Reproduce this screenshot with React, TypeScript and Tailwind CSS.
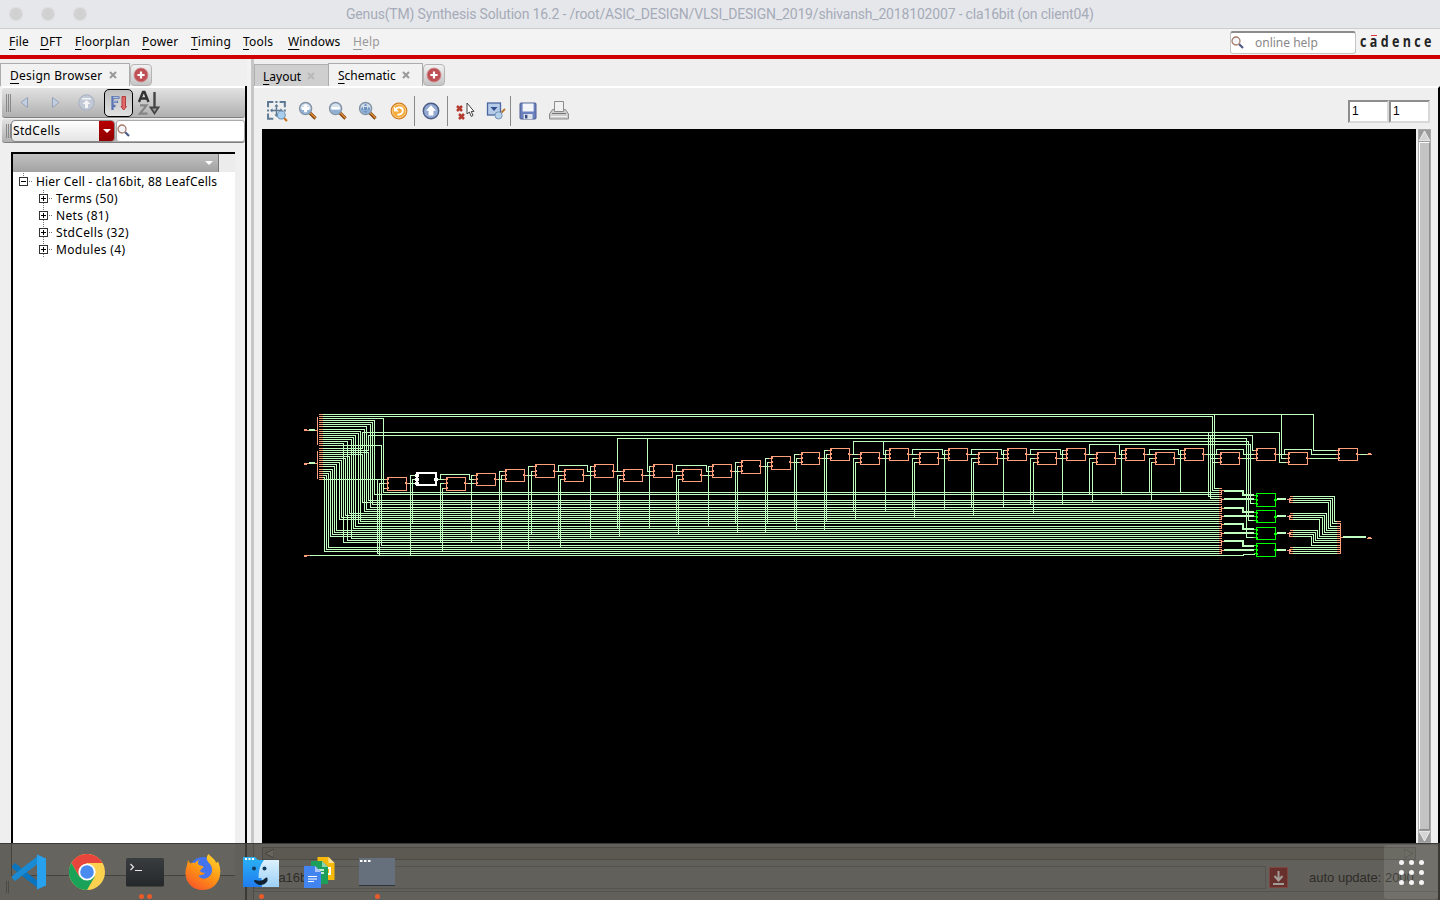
import React from "react";

const WIRE = "#c1ffc1";
const PIN = "#ffa07a";
const GREEN = "#00ff00";

/* ---------- schematic data ---------- */

type Cell = { x: number; y: number; h: number; w?: number; pins: number[]; out: number };

const A = (x: number, y: number): Cell => ({ x, y, h: 12, pins: [2, 6, 10], out: 6 });
const B = (x: number, y: number): Cell => ({ x, y, h: 13, pins: [2, 7, 11], out: 7 });

const cells: Cell[] = [
  { x: 387, y: 477, h: 13, pins: [2, 6, 11], out: 6 },
  { x: 446, y: 477, h: 13, pins: [2, 6, 11], out: 6 },
  { x: 476, y: 473, h: 12, pins: [2, 6, 10], out: 6 },
  A(505, 469), B(535, 464), A(564, 469), B(594, 464), A(623, 469), B(653, 464),
  A(682, 469), B(712, 464),
  { x: 741, y: 460, h: 13, pins: [2, 6, 11], out: 6 },
  { x: 771, y: 456, h: 13, pins: [2, 6, 10], out: 6 },
  { x: 801, y: 452, h: 12, w: 18, pins: [2, 6, 10], out: 6 },
  A(830, 448), A(860, 452), A(889, 448), A(919, 452), A(948, 448), A(978, 452),
  A(1007, 448), A(1037, 452), A(1066, 448), A(1096, 452), A(1125, 448), A(1155, 452),
  A(1184, 448), A(1220, 452), A(1256, 448), A(1288, 452), A(1338, 448),
];

const greenCells = [
  { y: 493, h: 13 },
  { y: 510, h: 12 },
  { y: 527, h: 12 },
  { y: 543, h: 13 },
];

/* [start y, bend x, bus y] */
const fan: number[][] = [
  [418, 383, 492], [420, 374, 494], [422, 372, 504], [424, 370, 507], [426, 366, 509],
  [429, 364, 511], [431, 360, 521], [433, 358, 523], [435, 355, 526], [437, 353, 528],
  [439, 351, 538], [441, 347, 540], [443, 343, 542], [445, 381, 545],
  [452, 368, 500], [454, 362, 502], [456, 349, 513], [458, 345, 515], [460, 341, 517],
  [462, 339, 519], [464, 336, 530], [466, 334, 532], [469, 332, 534], [471, 330, 536],
  [473, 328, 547], [475, 326, 549], [477, 324, 551],
];

/* [pin y, drop x, bus y, pin x] */
const drops: number[][] = [
  [483, 379, 555, 387], [488, 383, 488, 387], [475, 410, 555, 416], [479, 412, 523, 416],
  [483, 440, 542, 446], [488, 442, 551, 446], [475, 471, 542, 476], [471, 499, 540, 505],
  [475, 501, 549, 505], [466, 528, 549, 535], [471, 531, 534, 535], [475, 558, 538, 564],
  [479, 560, 547, 564], [466, 590, 538, 594], [475, 617, 528, 623], [479, 619, 536, 623],
  [466, 649, 528, 653], [475, 676, 525, 682], [479, 678, 534, 682], [466, 708, 526, 712],
  [462, 735, 523, 741], [466, 737, 532, 741], [458, 765, 532, 771], [462, 767, 523, 771],
  [454, 794, 521, 801], [458, 796, 530, 801], [450, 824, 530, 830], [454, 826, 521, 830],
  [458, 853, 511, 860], [462, 855, 519, 860], [450, 885, 511, 889], [458, 912, 509, 919],
  [462, 914, 516, 919], [450, 944, 509, 948], [458, 971, 507, 978], [462, 973, 515, 978],
  [450, 1003, 507, 1007], [458, 1030, 504, 1037], [462, 1033, 513, 1037], [450, 1062, 504, 1066],
  [458, 1089, 494, 1096], [462, 1092, 502, 1096], [450, 1121, 494, 1125], [458, 1149, 492, 1155],
  [462, 1151, 500, 1155], [450, 1180, 492, 1184],
];

/* [y, from x, to x] */
const links: number[][] = [
  [483, 406, 416], [479, 436, 446], [483, 465, 476], [479, 495, 505], [475, 524, 535],
  [471, 554, 564], [475, 583, 594], [471, 613, 623], [475, 642, 653], [471, 672, 682],
  [475, 701, 712], [471, 731, 741], [466, 760, 771], [462, 790, 801], [458, 819, 830],
  [454, 849, 860], [458, 879, 889], [454, 908, 919], [458, 938, 948], [454, 967, 978],
  [458, 997, 1007], [454, 1026, 1037], [458, 1056, 1066], [454, 1085, 1096], [458, 1115, 1125],
  [454, 1144, 1155], [458, 1174, 1184], [454, 1203, 1220], [458, 1239, 1256], [454, 1275, 1288],
  [458, 1307, 1338], [454, 1357, 1366],
];

/* [from x, from y, top y, to x, end x] */
const hops: number[][] = [
  [440, 479, 474, 469, 476], [558, 471, 465, 587, 594], [676, 471, 465, 706, 712],
  [617, 471, 438, 647, 653], [853, 454, 441, 883, 889], [912, 454, 449, 942, 948],
  [971, 454, 449, 1001, 1007], [1030, 454, 449, 1060, 1066], [1089, 454, 444, 1119, 1125],
  [1149, 454, 449, 1178, 1184], [1216, 454, 449, 1243, 1256], [1284, 454, 449, 1311, 1338],
];

const trunk = [
  "M322 414H1313V450H1338", "M322 416H1212V490H1218", "M322 448H362V432H1279V462H1288",
  "M322 450H368V435H1252V450H1256", "M617 438H1246V537H1254", "M853 441H1248V520H1254",
  "M1089 444H1250V503H1254", "M1214 414V488H1218", "M1210 435V498H1218", "M1208 432V496H1218",
  "M1281 414V458H1288", "M1210 458H1220", "M1212 462H1220", "M322 479H387", "M377 479V553H1218",
  "M308 555H1243V554H1254",
].join("");

const groups = [
  [488, 490, 492, 494], [496, 498, 500, 502], [504, 507, 509, 511], [513, 515, 517, 519],
  [521, 523, 526, 528], [530, 532, 534, 536], [538, 540, 542, 545], [547, 549, 551, 553],
];
const apex = [490, 499, 508, 516, 524, 533, 541, 550];

const outs = [
  [496, 1334, 521], [498, 1332, 523], [500, 1330, 526], [502, 1328, 528],
  [513, 1326, 530], [515, 1324, 532], [517, 1322, 534], [519, 1319, 536],
  [530, 1317, 538], [532, 1315, 540], [534, 1313, 542], [536, 1311, 545],
  [547, 1320, 547], [549, 1320, 549], [551, 1320, 551], [553, 1320, 553],
];
const outGroups = [[496, 498, 500, 502], [513, 515, 517, 519], [530, 532, 534, 536], [547, 549, 551, 553]];
const outApex = [499, 516, 533, 550];

const topBus = [414, 416, 418, 420, 422, 424, 426, 429, 431, 433, 435, 437, 439, 441, 443, 445];
const lowBus = [448, 450, 452, 454, 456, 458, 460, 462, 464, 466, 469, 471, 473, 475, 477, 479];

const wirePath =
  trunk +
  fan.map(([y, x, b]) => `M322 ${y}H${x}V${b}H1218`).join("") +
  drops.map(([y, x, b, p]) => `M${p} ${y}H${x}V${b}`).join("") +
  links.map(([y, a, b]) => `M${a} ${y}H${b}`).join("") +
  hops.map(([x, y, t, x2, e]) => `M${x} ${y}V${t}H${x2}V${y}H${e}`).join("") +
  outs.map(([y, x, t]) => `M1291 ${y}H${x}V${t}H1336`).join("");

const pinPath =
  topBus.map((y) => `M318 ${y}H322`).join("") +
  lowBus.map((y) => `M318 ${y}H322`).join("") +
  "M317 416V444M317 450V478M304 430H317M304 463H317M304 555H309M1366 454H1371M1366 538H1371" +
  groups.map((g) => g.map((y) => `M1218 ${y}H1221`).join("") + `M1221 ${g[0] + 1}V${g[3]}`).join("") +
  apex.map((y) => `M1221 ${y}H1224`).join("") +
  outGroups.map((g) => g.map((y) => `M1289 ${y}H1292`).join("") + `M1289 ${g[0] + 1}V${g[3]}`).join("") +
  outApex.map((y) => `M1286 ${y}H1290`).join("") +
  outs.map(([, , t]) => `M1336 ${t}H1340`).join("") +
  "M1340 522V553M1340 537H1343";

const cellPath = cells
  .map((c) => {
    const w = c.w ?? 19;
    return (
      `M${c.x} ${c.y}h${w}v${c.h}h-${w}z` +
      c.pins.map((p) => `M${c.x - 3} ${c.y + p}h4`).join("") +
      `M${c.x + w - 1} ${c.y + c.out}h3`
    );
  })
  .join("");

const nubs = cells.flatMap((c) => [
  ...c.pins.map((p) => [c.x, c.y + p]),
  [c.x + (c.w ?? 19) - 1, c.y + c.out],
]);

function Schematic() {
  return (
    <svg className="block h-[714px] w-[1154px]" viewBox="262 129 1154 714" shapeRendering="crispEdges" fill="none">
      <g transform="translate(.5 .5)" strokeWidth="1">
        <path d={wirePath} stroke={WIRE} />
        <path d={pinPath} stroke={PIN} />
        <path d={cellPath} stroke={PIN} />
      </g>
      {nubs.map(([x, y], i) => (
        <rect key={i} x={x} y={y - 1} width="2" height="2" fill={PIN} />
      ))}
      {/* selected instance */}
      <rect x="417" y="473" width="19" height="12" stroke="#fff" strokeWidth="2" />
      <path d="M415 474h4v3h-4zM415 478h4v3h-4zM415 482h4v3h-4zM434 478h4v3h-4z" fill="#fff" />
      <g fill={GREEN}>
        {greenCells.map((c) => (
          <React.Fragment key={c.y}>
            <rect x="1256.5" y={c.y + 0.5} width="19" height={c.h} stroke={GREEN} fill="none" />
            {[2, 6, 10].map((p) => (
              <rect key={p} x="1254" y={c.y + p} width="4" height="1" />
            ))}
            {[2, 6, 10].map((p) => (
              <rect key={p} x="1256" y={c.y + p} width="2" height="2" />
            ))}
            <rect x="1274" y={c.y + 6} width="3" height="2" />
          </React.Fragment>
        ))}
      </g>
      <g stroke={WIRE} strokeWidth="2">
        <path d="M1224 491H1243V495H1254M1224 499H1254M1224 508H1243V512H1254M1224 516H1254M1224 524H1243V529H1254M1224 533H1254M1224 541H1243V546H1254M1224 550H1254" />
        <path d="M1277 499H1286M1277 516H1286M1277 533H1286M1277 550H1286M1343 537H1366M309 430H315M309 463H315" />
      </g>
      <path d="M304 429h3v2h-3zM304 463h3v2h-3zM304 555h3v2h-3zM1368 453h3v2h-3zM1368 537h3v2h-3z" fill={PIN} />
    </svg>
  );
}

/* ---------- small widgets ---------- */

function Menu({ label, w, off }: { label: string; w: string; off?: boolean }) {
  return (
    <span className={`${w} shrink-0 ${off ? "text-[#999]" : "text-black"}`}>
      <span className="underline decoration-1 underline-offset-[3px]">{label[0]}</span>
      {label.slice(1)}
    </span>
  );
}

function PlusButton() {
  return (
    <div className="flex h-[22px] w-[22px] items-center justify-center self-end rounded-[4px] border border-[#b4b4b4] bg-linear-to-b from-[#f2f2f2] to-[#c4c4c4]">
      <svg className="h-4 w-4" viewBox="0 0 16 16">
        <circle cx="8" cy="8" r="7" fill="#be5055" stroke="#d38c8e" strokeWidth=".8" />
        <path d="M8 4.4v7.2M4.4 8h7.2" stroke="#fff" strokeWidth="2.2" />
      </svg>
    </div>
  );
}

function Cross({ c }: { c: string }) {
  return (
    <svg className="h-2 w-2" viewBox="0 0 8 8">
      <path d="M1 1l6 6M7 1l-6 6" stroke={c} strokeWidth="2" />
    </svg>
  );
}

function Search() {
  return (
    <svg className="h-[13px] w-[13px] shrink-0" viewBox="0 0 13 13" fill="none">
      <path d="M8 8l4 4" stroke="#4a5a88" strokeWidth="2.2" />
      <circle cx="5" cy="5" r="4" fill="#f4f6fa" stroke="#a87c6c" strokeWidth="1.3" />
    </svg>
  );
}

function Zoom({ kind }: { kind: "in" | "out" | "fit" }) {
  return (
    <svg className="h-5 w-5" viewBox="0 0 20 20" fill="none">
      <path d="M11.5 11.5l6 6" stroke="#7d4310" strokeWidth="3.2" />
      <path d="M12 11.5l5.5 5.5" stroke="#dd8a34" strokeWidth="1.6" />
      <circle cx="7.6" cy="7.4" r="6" fill="#d5e2f0" stroke="#8393a6" strokeWidth="1.5" />
      <path d="M2.5 8h10.2a5 5 0 0 1-10.2 0z" fill="#8fb0d5" />
      {kind === "in" && <path d="M7.6 3.6v7.6M3.8 7.4h7.6" stroke="#fff" strokeWidth="3" />}
      {kind === "out" && <path d="M3.5 7.4h8.2" stroke="#fff" strokeWidth="2.6" />}
      {kind === "fit" && (
        <path d="M7.6 2.6l2 2.2h-4zM7.6 12.2l2-2.2h-4zM2.8 7.4l2.2-2v4zM12.4 7.4l-2.2-2v4zM6 6h3.2v3H6z" fill="#6d91bd" />
      )}
    </svg>
  );
}

function FitAll() {
  return (
    <svg className="h-[21px] w-[21px]" viewBox="0 0 20 20" fill="none">
      <path d="M1 6V1h5M12 1h5v5M1 12v5h5M8 1h2M1 8v2M17 8v2" stroke="#5d7a94" strokeWidth="1.9" />
      <path d="M9 4v10M4 9h10" stroke="#5d7a94" strokeWidth="1.4" />
      <path d="M9 2.8l2 2.4H7zM9 15.2l2-2.4H7zM2.800 9l2.400-2v4zM15.200 9l-2.400-2v4z" fill="#5d7a94" />
      <path d="M16 16l3 3" stroke="#c9701c" strokeWidth="2.2" />
      <circle cx="13.6" cy="13.4" r="3.8" fill="#a9cdec" stroke="#6f93b5" />
    </svg>
  );
}

function Undo() {
  return (
    <svg className="h-[18px] w-[18px]" viewBox="0 0 18 18" fill="none">
      <circle cx="9" cy="9" r="7.8" fill="#f6ab3b" stroke="#cf7c22" strokeWidth="1.2" />
      <circle cx="9" cy="9" r="6.8" stroke="#fbd9a0" strokeWidth=".8" />
      <path d="M5.6 7.400c2.6-3.600 7.400-2 7.200 1.600-.1 2.600-2.800 4-5.400 3.400" stroke="#fff" strokeWidth="1.900" />
      <path d="M4 4.500v5h4.800z" fill="#fff" />
    </svg>
  );
}

function Up() {
  return (
    <svg className="h-[18px] w-[18px]" viewBox="0 0 18 18">
      <circle cx="9" cy="9" r="7.700" fill="#93abd3" stroke="#4a5c86" strokeWidth="1.400" />
      <path d="M9 3.2l5 5.600h-2.600v4.700H6.600V8.800H4z" fill="#fff" />
    </svg>
  );
}

function Deselect() {
  return (
    <svg className="h-[20px] w-[20px]" viewBox="0 0 20 20" fill="none">
      <path d="M2 5l5 5M7 5l-5 5M4 13l5 5M9 13l-5 5" stroke="#b3392f" strokeWidth="2.5" />
      <path d="M12 2v11l2.4-2 1.8 4.400 1.800-.9-1.800-4.100h2.800z" fill="#fff" stroke="#444" strokeWidth="1" />
    </svg>
  );
}

function SelectBox() {
  return (
    <svg className="h-[18px] w-[20px]" viewBox="0 0 20 18" fill="none">
      <rect x="1.500" y="1" width="13" height="12" fill="#b6cbe8" stroke="#4a67a0" strokeWidth="1.3" />
      <path d="M4.500 5h7l-3.500 4z" fill="#2f4e8d" />
      <path d="M14 12l5-5" stroke="#b97a35" strokeWidth="2" />
      <circle cx="12.6" cy="13.400" r="3.600" fill="#b4d0e8" stroke="#7295b8" />
    </svg>
  );
}

function Save() {
  return (
    <svg className="h-[18px] w-[18px]" viewBox="0 0 18 18">
      <rect x="1" y="1" width="16" height="16" rx="1" fill="#6b80be" stroke="#4d5c90" />
      <rect x="3.6" y="1.5" width="11" height="8" fill="#f3f5fa" />
      <rect x="4.6" y="12" width="9" height="5" fill="#dde1ea" />
      <rect x="6" y="12.8" width="2.400" height="3.600" fill="#394a80" />
    </svg>
  );
}

function Print() {
  return (
    <svg className="h-[20px] w-[20px]" viewBox="0 0 20 20" stroke="#8c8c8c">
      <path d="M3.500 8.500h13l3 4.500v5H.5v-5z" fill="#cdcdcd" />
      <path d="M5.500 10.500v-10h9v10z" fill="#f1f1f1" />
      <path d="M3 12.500h14" stroke="#777" />
      <path d="M2 15.500h16" stroke="#f0f0f0" />
    </svg>
  );
}

function Grip({ h }: { h: string }) {
  return (
    <div className={`flex gap-[1px] ${h}`}>
      <i className="w-px bg-[#888]" />
      <i className="w-px bg-[#888]" />
      <i className="w-px bg-[#888]" />
    </div>
  );
}

const rows = ["Terms (50)", "Nets (81)", "StdCells (32)", "Modules (4)"];

function Expander({ open }: { open?: boolean }) {
  return (
    <svg className="h-[17px] w-[14px] shrink-0" viewBox="0 0 14 17" fill="none" shapeRendering="crispEdges">
      <path d="M4.500 0v4M10 8.500h4" stroke="#777" strokeDasharray="1 1" />
      {!open && <path d="M4.500 13v4" stroke="#777" strokeDasharray="1 1" />}
      <rect x=".5" y="4.500" width="8" height="8" fill="#fff" stroke="#333" />
      <path d={open ? "M2 8.500h5" : "M2 8.500h5M4.500 6v5"} stroke="#000" />
    </svg>
  );
}

function LeftPane() {
  return (
    <div className="flex w-[247px] shrink-0 flex-col">
      <div className="flex h-[27px] items-end pt-1">
        <div className="flex h-[23px] w-[130px] shrink-0 items-center gap-[6px] border-x border-t border-[#ababab] bg-[#f2f2f2] pl-[9px]">
          <span className="w-[93px] whitespace-nowrap tracking-[0.27px]">
            <span className="underline underline-offset-[3px]">D</span>esign Browser
          </span>
          <Cross c="#999" />
        </div>
        <PlusButton />
      </div>
      <div className="flex min-h-0 flex-1 flex-col border-r-2 border-black pl-[2px]">
        <div className="h-[2px] bg-white" />
        <div className="flex h-[30px] w-[243px] shrink-0 items-center rounded-[3px] border-b border-[#808080] bg-linear-to-b from-[#e2e2e2] to-[#b0b0b0] pl-1">
          <Grip h="h-[18px]" />
          <svg className="ml-[9px] h-[13px] w-[9px]" viewBox="0 0 9 12"><path d="M7.500 1v10L1 6z" fill="#c3cfe0" stroke="#95a3ba" /></svg>
          <svg className="ml-[22px] h-[13px] w-[9px]" viewBox="0 0 9 12"><path d="M1.500 1v10L8 6z" fill="#c3cfe0" stroke="#95a3ba" /></svg>
          <svg className="ml-[18px] h-[17px] w-[17px]" viewBox="0 0 17 17">
            <circle cx="8.500" cy="8.500" r="7.700" fill="#c2c9d6" stroke="#a5afc0" />
            <path d="M4 4h9v1.500H4zM8.500 6l4 4H10v4H7v-4H4.500z" fill="#f4f4f4" />
          </svg>
          <div className="ml-[9px] flex h-[28px] w-[29px] items-center justify-center rounded-[5px] border border-black bg-linear-to-b from-[#bebebe] to-[#e2e2e2]">
            <svg className="h-4 w-[18px]" viewBox="0 0 18 16" fill="none">
              <path d="M2.500 1v14M2 2.500h7.500M2 6.800h6M2 11h3.500" stroke="#5a74b4" strokeWidth="2.300" />
              <path d="M3 2.500h5.500M3 6.800h4" stroke="#c3d0ec" strokeWidth=".8" />
              <path d="M12 1.500h3.500v10h1l-2.800 3.500-2.700-3.500h1z" fill="#e06a6a" stroke="#b23a3a" />
            </svg>
          </div>
          <svg className="ml-1 h-[26px] w-[24px]" viewBox="0 0 24 26" fill="none">
            <path d="M2 12L6 2h1.500l4 10M4 8.500h6" stroke="#333" strokeWidth="2.400" />
            <path d="M3 15.300h6.500L3 23.700h7.500" stroke="#858585" strokeWidth="2.200" />
            <path d="M17.500 2v17" stroke="#444" strokeWidth="2.400" />
            <path d="M13.500 17.500h8l-4 6z" stroke="#444" strokeWidth="1.800" fill="#999" />
          </svg>
        </div>
        <div className="mt-px flex h-[24px] w-[243px] shrink-0 items-center rounded-[3px] border-b border-[#808080] bg-linear-to-b from-[#e2e2e2] to-[#b0b0b0] pl-1">
          <Grip h="h-[14px]" />
          <div className="flex h-[22px] w-[104px] items-center overflow-hidden rounded-[4px] border border-[#888] bg-linear-to-b from-white to-[#e4e4e4]">
            <span className="-mt-px w-[87px] pl-[1px] tracking-[0.35px]">StdCells</span>
            <span className="flex h-full flex-1 items-center justify-center bg-linear-to-b from-[#b90000] to-[#8f0000]">
              <svg className="h-1 w-2" viewBox="0 0 8 4"><path d="M0 0h8L4 4z" fill="#fff" /></svg>
            </span>
          </div>
          <div className="ml-[1px] flex h-[22px] flex-1 items-center rounded-[3px] border border-[#aaa] bg-white">
            <Search />
          </div>
        </div>
        <div className="mt-[9px] ml-[9px] flex w-[224px] flex-1 flex-col border-t-2 border-l-2 border-black bg-white">
          <div className="mb-px flex h-[18px] shrink-0 bg-[#ececec]">
            <div className="flex w-[206px] items-center justify-end border-r border-[#777] bg-linear-to-b from-[#c2c2c2] to-[#a2a2a2] pr-[5px]">
              <svg className="h-1 w-2" viewBox="0 0 8 4"><path d="M0 0h8L4 4z" fill="#fff" /></svg>
            </div>
          </div>
          <div className="flex h-[17px] items-center pl-[6px]">
            <Expander open />
            <span className="ml-[3px] whitespace-nowrap">Hier Cell - cla16bit, 88 LeafCells</span>
          </div>
          {rows.map((r) => (
            <div key={r} className="flex h-[17px] items-center pl-[26px]">
              <Expander />
              <span className="ml-[3px] tracking-[0.33px]">{r}</span>
            </div>
          ))}
        </div>
      </div>
    </div>
  );
}

function Tool({ w, children }: { w: string; children: React.ReactNode }) {
  return <div className={`${w} flex shrink-0 items-center justify-center`}>{children}</div>;
}
const Bar = () => <i className="h-[30px] w-px shrink-0 bg-[#8a8a8a]" />;

function RightPane() {
  return (
    <div className="flex min-w-0 flex-1 flex-col">
      <div className="flex h-[27px] items-end">
        <div className="flex h-[22px] w-[74px] items-center gap-[6px] border-t border-l border-[#b0b0b0] bg-[#cfcfcf] pt-px pl-2">
          <span className="w-[38px] tracking-[0]"><span className="underline underline-offset-[3px]">L</span>ayout</span>
          <Cross c="#b8b8b8" />
        </div>
        <div className="flex h-[23px] w-[95px] items-center gap-[5px] border-x border-t border-[#ababab] bg-[#f2f2f2] pl-[9px]">
          <span className="w-[59px] tracking-[0]"><span className="underline underline-offset-[3px]">S</span>chematic</span>
          <Cross c="#999" />
        </div>
        <PlusButton />
      </div>
      <div className="flex min-h-0 flex-1 flex-col border-t-2 border-r-2 border-t-white border-r-black pl-[8px]">
        <div className="flex h-[41px] shrink-0 items-center pt-[5px]">
          <Tool w="w-[31px]"><FitAll /></Tool>
          <Tool w="w-[30px]"><Zoom kind="in" /></Tool>
          <Tool w="w-[30px]"><Zoom kind="out" /></Tool>
          <Tool w="w-[30px]"><Zoom kind="fit" /></Tool>
          <Tool w="w-[31px]"><Undo /></Tool>
          <Bar />
          <Tool w="w-[32px]"><Up /></Tool>
          <Bar />
          <Tool w="w-[34px]"><Deselect /></Tool>
          <Tool w="w-[28px]"><SelectBox /></Tool>
          <Bar />
          <Tool w="w-[34px]"><Save /></Tool>
          <Tool w="w-[27px]"><Print /></Tool>
          <div className="mr-[8px] ml-auto flex font-['Liberation_Sans',sans-serif] text-[12px]">
            <span className="h-[23px] w-[41px] border-2 border-[#d8d8d8] border-t-[#8d8d8d] border-l-[#8d8d8d] bg-white pl-[2px] leading-[18px]">1</span>
            <span className="h-[23px] w-[41px] border-2 border-[#d8d8d8] border-t-[#8d8d8d] border-l-[#8d8d8d] bg-white pl-[2px] leading-[18px]">1</span>
          </div>
        </div>
        <div className="flex h-[714px] shrink-0">
          <div className="w-[1154px] shrink-0 bg-black"><Schematic /></div>
          <div className="ml-[2px] flex w-[13px] flex-col border border-[#aaa] bg-[#c3c3c3]">
            <div className="flex h-[12px] items-center justify-center bg-[#9b9b9b]">
              <svg className="h-[10px] w-[11px]" viewBox="0 0 11 10"><path d="M5.500 0L11 10H0z" fill="#d4d4d4" stroke="#fff" strokeWidth=".7" /></svg>
            </div>
            <div className="flex-1 border border-t-white border-r-[#8d8d8d] border-b-[#8d8d8d] border-l-white bg-[#c3c3c3]" />
            <div className="flex h-[12px] items-center justify-center bg-[#9b9b9b]">
              <svg className="h-[10px] w-[11px]" viewBox="0 0 11 10"><path d="M5.500 10L11 0H0z" fill="#d4d4d4" stroke="#fff" strokeWidth=".7" /></svg>
            </div>
          </div>
        </div>
      </div>
    </div>
  );
}

/* ---------- dock ---------- */

function Code() {
  return (
    <svg className="h-9 w-9" viewBox="0 0 36 36">
      <path d="M1 12l3-3 24 19v7L1 14z" fill="#0b74bd" />
      <path d="M1 24l3 3L28 9V1L1 22z" fill="#1a8ad2" />
      <path d="M26 .500l9 4v27l-9 4z" fill="#27a0ee" />
    </svg>
  );
}
function Chrome() {
  return (
    <svg className="h-9 w-9" viewBox="0 0 36 36">
      <circle cx="18" cy="18" r="18" fill="#fdd150" />
      <path d="M2.400 9A18 18 0 0 1 33.600 9H18L10.200 22.500z" fill="#e8453c" />
      <path d="M2.400 9A18 18 0 0 0 18 36l7.800-13.500H10.200z" fill="#1ba259" />
      <circle cx="18" cy="18" r="8.600" fill="#fff" />
      <circle cx="18" cy="18" r="6.800" fill="#4a8bf0" />
    </svg>
  );
}
function Terminal() {
  return (
    <svg className="h-[29px] w-[38px]" viewBox="0 0 38 29" fill="none">
      <defs>
        <linearGradient id="tg" x1="0" y1="0" x2="0" y2="1"><stop stopColor="#3a3d3f" /><stop offset="1" stopColor="#25282a" /></linearGradient>
      </defs>
      <rect width="38" height="28.500" rx="1.500" fill="url(#tg)" />
      <path d="M4.500 6l3 3-3 3M9 12.500h7" stroke="#e8e8e8" strokeWidth="1.200" />
    </svg>
  );
}
function Firefox() {
  return (
    <svg className="h-9 w-9" viewBox="0 0 36 36">
      <defs>
        <linearGradient id="ff" x1=".8" y1="0" x2=".2" y2="1"><stop stopColor="#ffd32a" /><stop offset=".5" stopColor="#ff9414" /><stop offset="1" stopColor="#f7542a" /></linearGradient>
      </defs>
      <circle cx="18" cy="17" r="14" fill="#4374ee" />
      <path d="M3 6c1 1.500 1.500 2.500 2 3.500 1.500-1 3.500-1 5-.5 1-1.500 2.500-2.500 4-3-1 1.500-1.500 3.500 0 5 1.500 1 4 .5 4.500 2-.5 1.500-3 2-3.500 4 1 2 3 1.500 5 2-1.500 2.500-4.500 1.500-6.500 3 3 4 9 3.500 12-1 2.500-4 1.500-8.500-.5-11-4-3.500-4-7-1.500-10 2 3 7 5 7.500 9l2-1.500C39 20 33 36 18 36 7 36 0 28 .500 18 .500 14 2.500 11 3 6z" fill="url(#ff)" />
    </svg>
  );
}
function Files() {
  return (
    <svg className="h-[32px] w-[38px]" viewBox="0 0 38 32" fill="none">
      <defs>
        <linearGradient id="f1" x1="0" y1="0" x2="0" y2="1"><stop stopColor="#2bb3f5" /><stop offset="1" stopColor="#1f7df0" /></linearGradient>
        <linearGradient id="f2" x1="0" y1="0" x2="0" y2="1"><stop stopColor="#dcf1fd" /><stop offset="1" stopColor="#9bd0f7" /></linearGradient>
      </defs>
      <path d="M1 1h12l3 3h21v27H1z" fill="url(#f1)" />
      <path d="M22 4h15v27H20c-.5-4-.5-6-.4-9h-3C16.500 15 18 9 22 4z" fill="url(#f2)" />
      <path d="M3 3h2M6.500 3h2M10 3h2" stroke="#fff" strokeWidth="2" />
      <circle cx="12" cy="12.500" r="2" fill="#103b5c" /><circle cx="22.500" cy="12.500" r="2" fill="#103b5c" />
      <path d="M13 25c5 1.800 9 .5 11.500-2.500v2c-2 4-8 5-11.500.5z" stroke="#123" strokeWidth="2" strokeLinejoin="round" fill="#123" />
    </svg>
  );
}
function Docs() {
  return (
    <svg className="h-[32px] w-[31px]" viewBox="0 0 31 32">
      <path d="M13.500 1h11l6 6v17h-17z" fill="#f7b90a" /><path d="M24.500 1v6h6z" fill="#fbe09a" />
      <path d="M20 12h6v6h-6z" stroke="#fff" strokeWidth="2" fill="none" />
      <path d="M7 5h11l6 6v17H7z" fill="#1d9f5c" /><path d="M18 5v6h6z" fill="#8fd3b0" />
      <path d="M14 14h6M14 17h6" stroke="#fff" strokeWidth="1.400" />
      <path d="M0 10h11l6 6v16H0z" fill="#4285f0" /><path d="M11 10v6h6z" fill="#a9c6fa" />
      <path d="M4 20.500h9M4 23h9M4 25.500h6" stroke="#fff" strokeWidth="1.100" />
    </svg>
  );
}
function Window() {
  return (
    <svg className="h-[28px] w-[36px]" viewBox="0 0 36 28">
      <rect width="36" height="28" fill="#66707c" /><rect y="27" width="36" height="1" fill="#2e343b" />
      <path d="M1 3h2.500M5 3h2.500M9 3h2.500" stroke="#fff" strokeWidth="2" />
    </svg>
  );
}

const Dot = () => <i className="h-[5px] w-[5px] rounded-full bg-[#e95a2b]" />;

function DockItem({ children, dots = 0 }: { children: React.ReactNode; dots?: number }) {
  return (
    <div className="flex h-[57px] w-[58px] shrink-0 flex-col items-center">
      <div className="flex h-[50px] items-center pt-[6px]">{children}</div>
      <div className="flex gap-[3px]">{Array.from({ length: dots }, (_, i) => <Dot key={i} />)}</div>
    </div>
  );
}

function Dock() {
  return (
    <div className="absolute inset-x-0 bottom-0 flex h-[57px] overflow-hidden border-t border-[#3c3b38] bg-[#62605a]">
      {/* dimmed window edges and status bar */}
      <div className="absolute inset-0 flex">
        <div className="relative w-[247px] border-r-2 border-[#3a3936]">
          <div className="absolute top-0 left-[11px] h-[32px] w-[224px] border-b border-l border-[#45433f] bg-[#66645e]" />
          <div className="absolute top-[37px] left-[6px] h-[12px] w-[3px] border-x border-[#4b4a46]" />
        </div>
        <div className="w-[7px] border-r border-[#4e4c48] bg-[#605e58]" />
        <div className="flex flex-1 flex-col border-r-2 border-[#3a3936]">
          <div className="mt-[3px] ml-[8px] flex h-[13px] w-[1154px] items-center justify-between border border-[#4d4b46] bg-[#5b5952] px-[2px]">
            <svg className="h-[9px] w-[9px]" viewBox="0 0 9 9"><path d="M9 0v9L0 4.500z" fill="#66645e" stroke="#45433f" /></svg>
            <svg className="h-[9px] w-[9px]" viewBox="0 0 9 9"><path d="M0 0v9l9-4.500z" fill="#5e5c55" stroke="#4c4a45" /></svg>
          </div>
          <div className="mt-[5px] flex h-[25px] items-center font-['Liberation_Sans',sans-serif] text-[13px] tracking-[0] text-[#2d2c29]">
            <div className="flex h-[23px] w-[1012px] items-center border border-[#55534d] pl-[14px]">cla16bit</div>
            <div className="ml-[3px] flex h-[21px] w-[19px] items-center justify-center border border-[#7c4741] bg-[#68302d]">
              <svg className="h-[14px] w-[11px]" viewBox="0 0 11 14" fill="none"><path d="M5.500 0v9M1.500 5l4 4.500 4-4.500M0 13h11" stroke="#a29c97" strokeWidth="2" /></svg>
            </div>
            <span className="ml-[21px] whitespace-nowrap">auto update: 2000</span>
          </div>
          <div className="mt-[1px] border-t border-[#55534e]" />
        </div>
      </div>
      <div className="relative flex w-full">
        <DockItem><Code /></DockItem>
        <DockItem><Chrome /></DockItem>
        <DockItem dots={2}><Terminal /></DockItem>
        <DockItem><Firefox /></DockItem>
        <DockItem dots={1}><Files /></DockItem>
        <DockItem><Docs /></DockItem>
        <DockItem dots={1}><Window /></DockItem>
        <div className="mt-px mr-[2px] ml-auto flex h-[54px] w-[54px] items-center justify-center rounded-[3px] bg-white/10">
          <div className="grid grid-cols-3 gap-[5px]">
            {Array.from({ length: 9 }, (_, i) => <i key={i} className="h-[5px] w-[5px] rounded-full bg-[#f4f4f4]" />)}
          </div>
        </div>
      </div>
    </div>
  );
}

export default function App() {
  return (
    <div className="relative flex h-[900px] w-[1440px] flex-col overflow-hidden bg-[#efefef] font-['Noto_Sans','Open_Sans',sans-serif] text-[12px] leading-[17px] tracking-[0.18px] text-black">
      <div className="flex h-[29px] shrink-0 items-center border-b border-[#cdcdcd] bg-[#e6e7eb] pl-[10px]">
        <div className="flex gap-[20px]">
          {[0, 1, 2].map((i) => (
            <i key={i} className="h-3 w-3 rounded-full bg-[#d1d1d1] ring-1 ring-[#dcdcdf]" />
          ))}
        </div>
        <div className="ml-[260px] font-[Roboto,sans-serif] text-[14px] tracking-[-0.177px] whitespace-nowrap text-[#a5abb8]">
          Genus(TM) Synthesis Solution 16.2 - /root/ASIC_DESIGN/VLSI_DESIGN_2019/shivansh_2018102007 - cla16bit (on client04)
        </div>
      </div>
      <div className="flex h-[26px] shrink-0 items-center bg-[#f3f3f3] pb-px pl-[9px]">
        <Menu label="File" w="w-[31px]" />
        <Menu label="DFT" w="w-[35px]" />
        <Menu label="Floorplan" w="w-[67px]" />
        <Menu label="Power" w="w-[49px]" />
        <Menu label="Timing" w="w-[52px]" />
        <Menu label="Tools" w="w-[45px]" />
        <Menu label="Windows" w="w-[65px]" />
        <Menu label="Help" w="w-[40px]" off />
        <div className="mt-px ml-auto flex h-[23px] w-[126px] items-center rounded-[3px] border border-t-2 border-[#c4c4c4] border-t-[#8c8c8c] bg-white text-[#888]">
          <Search />
          <span className="-mt-px ml-[11px] tracking-[0]">online help</span>
        </div>
        <div className="relative ml-[4px] w-[80px] font-['Open_Sans',sans-serif] text-[16px] font-bold whitespace-nowrap text-[#222]">
          <span className="inline-block origin-left scale-x-[0.78] tracking-[4.3px]">cadence</span>
          <i className="absolute top-[2px] left-[11px] h-[1px] w-[6px] bg-[#e0383e]" />
        </div>
      </div>
      <div className="h-1 shrink-0 bg-[#d00000]" />
      <div className="flex min-h-0 flex-1">
        <LeftPane />
        <div className="w-[7px] shrink-0 border-r-[3px] border-[#c6c6c6] bg-[#f2f2f2]" />
        <RightPane />
      </div>
      <Dock />
    </div>
  );
}
